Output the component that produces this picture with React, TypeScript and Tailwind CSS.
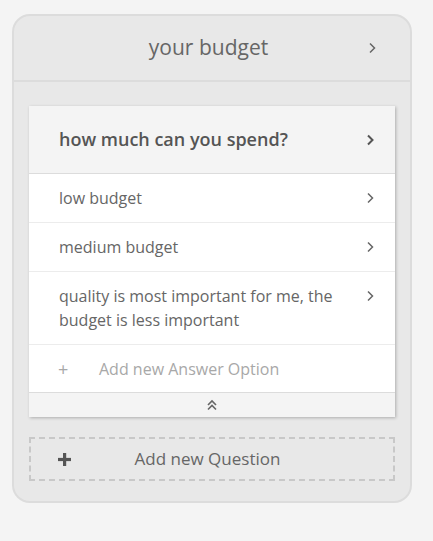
import React from "react";

const font = { fontFamily: '"Open Sans", "Liberation Sans", sans-serif' };

function Chevron({ className = "" }: { className?: string }) {
  return (
    <svg width="8" height="12" viewBox="0 0 8 12" className={className}>
      <polyline points="2,1.5 6.5,6 2,10.5" fill="none" stroke="currentColor" strokeWidth="1.5" />
    </svg>
  );
}

function DoubleUp() {
  return (
    <svg width="12" height="12" viewBox="0 0 12 12" className="text-[#666]">
      <polyline points="2,6 6,2 10,6" fill="none" stroke="currentColor" strokeWidth="1.6" />
      <polyline points="2,10.5 6,6.5 10,10.5" fill="none" stroke="currentColor" strokeWidth="1.6" />
    </svg>
  );
}

const answers = [
  "low budget",
  "medium budget",
  "quality is most important for me, the budget is less important",
];

export default function App() {
  return (
    <div className="min-h-[541px] bg-[#f4f4f4] pt-[14px] pl-[12px]" style={font}>
      <div className="w-[400px] rounded-[18px] border-2 border-[#dcdcdc] bg-[#e8e8e8]">
        {/* Topic header */}
        <div className="flex h-[66px] items-center border-b-2 border-[#dcdcdc] pl-[35px] pr-[34px] text-[#666]">
          <span className="flex-1 text-center text-[21px]">your budget</span>
          <Chevron className="text-[#666]" />
        </div>

        <div className="px-[15px] pt-[24px] pb-[20px]">
          {/* Question card */}
          <div className="bg-white shadow-[1px_1px_3px_rgba(0,0,0,0.25)]">
            <div className="flex h-[68px] items-center border-b border-[#dcdcdc] bg-[#f4f4f4] pl-[30px] pr-[21px]">
              <span className="flex-1 text-[18px] font-semibold text-[#555]">how much can you spend?</span>
              <Chevron className="text-[#555] [&>polyline]:[stroke-width:2]" />
            </div>

            {answers.map((a) => (
              <div key={a} className="flex items-start border-b border-[#ececec] py-[12px] pl-[30px] pr-[21px]">
                <span className="flex-1 pr-[20px] text-[16px] leading-[24px] text-[#666]">{a}</span>
                <Chevron className="mt-[6px] text-[#666]" />
              </div>
            ))}

            <div className="flex h-[48px] items-center border-b border-[#dcdcdc] pl-[29px] text-[#a8a8a8]">
              <span className="w-[41px] text-[18px] leading-none">+</span>
              <span className="text-[16px]">Add new Answer Option</span>
            </div>

            <div className="flex h-[24px] items-center justify-center bg-[#f4f4f4]">
              <DoubleUp />
            </div>
          </div>

          {/* Add question */}
          <div className="mt-[20px] flex h-[44px] items-center border-2 border-dashed border-[#c8c8c8] pl-[27px] pr-[49px]">
            <svg width="13" height="13" viewBox="0 0 13 13" className="text-[#555]">
              <rect x="5" y="0" width="3.2" height="13" fill="currentColor" />
              <rect x="0" y="4.9" width="13" height="3.2" fill="currentColor" />
            </svg>
            <span className="flex-1 text-center text-[17px] text-[#666]">Add new Question</span>
          </div>
        </div>
      </div>
    </div>
  );
}
